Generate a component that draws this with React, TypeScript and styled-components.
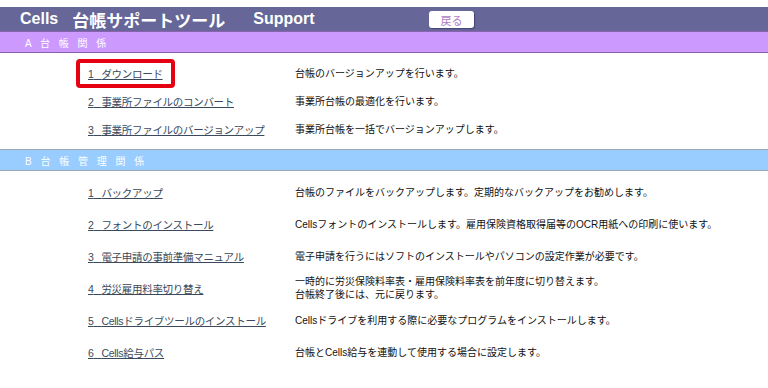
import React from 'react';
import styled, { createGlobalStyle } from 'styled-components';

const GlobalStyle = createGlobalStyle`
  html, body {
    margin: 0;
    padding: 0;
    background: #ffffff;
  }
  body {
    font-family: 'Liberation Sans', 'Noto Sans CJK JP', sans-serif;
  }
`;

interface Item {
  num: string;
  label: string;
  desc: string[];
  highlight?: boolean;
}

const sectionA: Item[] = [
  { num: '1', label: 'ダウンロード', desc: ['台帳のバージョンアップを行います。'], highlight: true },
  { num: '2', label: '事業所ファイルのコンバート', desc: ['事業所台帳の最適化を行います。'] },
  { num: '3', label: '事業所ファイルのバージョンアップ', desc: ['事業所台帳を一括でバージョンアップします。'] },
];

const sectionB: Item[] = [
  { num: '1', label: 'バックアップ', desc: ['台帳のファイルをバックアップします。定期的なバックアップをお勧めします。'] },
  { num: '2', label: 'フォントのインストール', desc: ['Cellsフォントのインストールします。雇用保険資格取得届等のOCR用紙への印刷に使います。'] },
  { num: '3', label: '電子申請の事前準備マニュアル', desc: ['電子申請を行うにはソフトのインストールやパソコンの設定作業が必要です。'] },
  { num: '4', label: '労災雇用料率切り替え', desc: ['一時的に労災保険料率表・雇用保険料率表を前年度に切り替えます。', '台帳終了後には、元に戻ります。'] },
  { num: '5', label: 'Cellsドライブツールのインストール', desc: ['Cellsドライブを利用する際に必要なプログラムをインストールします。'] },
  { num: '6', label: 'Cells給与パス', desc: ['台帳とCells給与を連動して使用する場合に設定します。'] },
];

const ItemRow = ({ item, height }: { item: Item; height: number }) => {
  const link = (
    <ItemLink href="#">
      {item.num}
      {'\u00a0\u00a0\u00a0'}
      {item.label}
    </ItemLink>
  );
  return (
    <Row height={height}>
      <LinkCell>{item.highlight ? <Highlight>{link}</Highlight> : link}</LinkCell>
      <Desc>
        {item.desc.map((d, j) => (
          <div key={j}>{d}</div>
        ))}
      </Desc>
    </Row>
  );
};

const App = () => {
  return (
    <>
      <GlobalStyle />
      <Page>
        <Header>
          <Title>
            <span>Cells</span>
            <TitleJa>台帳サポートツール</TitleJa>
            <span>Support</span>
          </Title>
          <BackButton>戻る</BackButton>
        </Header>
        <SectionBar color="#cc99ff" border="#8a62b0">A 台 帳 関 係</SectionBar>
        <List pad="6px 0 6px">
          {sectionA.map((item, i) => (
            <ItemRow key={i} item={item} height={28} />
          ))}
        </List>
        <SectionBar color="#99ccff" border="#9aa7b5">B 台 帳 管 理 関 係</SectionBar>
        <List pad="5px 0 0">
          {sectionB.map((item, i) => (
            <ItemRow key={i} item={item} height={32} />
          ))}
        </List>
      </Page>
    </>
  );
};

const Page = styled.div`
  padding-top: 7px;
  width: 768px;
`;

const Header = styled.div`
  height: 24px;
  background: #666699;
  display: flex;
  align-items: center;
  padding-left: 20px;
`;

const Title = styled.div`
  display: flex;
  align-items: center;
  gap: 14px;
  color: #ffffff;
  font-size: 16px;
  font-weight: 600;
  width: 409px;
  span:last-child {
    margin-left: 14px;
  }
`;

const TitleJa = styled.span`
  font-size: 17px;
`;

const BackButton = styled.div`
  width: 45px;
  height: 17px;
  background: #ffffff;
  border-radius: 3px;
  box-shadow: 1px 1px 1px rgba(40, 30, 80, 0.5);
  color: #b07cc8;
  font-size: 11px;
  display: flex;
  align-items: center;
  justify-content: center;
  margin-top: 1px;
`;

const SectionBar = styled.div<{ color: string; border: string }>`
  height: 20px;
  background: ${(p) => p.color};
  border-top: 1px solid ${(p) => p.border};
  border-bottom: 1px solid ${(p) => p.border};
  color: #ffffff;
  font-size: 10px;
  display: flex;
  align-items: center;
  padding-left: 25px;
  letter-spacing: 2.5px;
  word-spacing: 1px;
`;

const List = styled.div<{ pad: string }>`
  display: flex;
  flex-direction: column;
  padding: ${(p) => p.pad};
`;

const Row = styled.div<{ height: number }>`
  display: grid;
  grid-template-columns: 207px 1fr;
  align-items: center;
  height: ${(p) => p.height}px;
  padding-left: 88px;
`;

const LinkCell = styled.div`
  display: flex;
  align-items: center;
`;

const ItemLink = styled.a`
  color: #3a4a5c;
  font-size: 10.5px;
  text-decoration: underline;
  white-space: nowrap;
  letter-spacing: -0.3px;
  font-family: 'Liberation Sans', 'Noto Sans CJK JP', sans-serif;
`;

const Highlight = styled.span`
  display: inline-block;
  border: 4px solid #e50012;
  border-radius: 4px;
  padding: 3px 8px;
  margin: -7px -12px;
  line-height: 13px;
`;

const Desc = styled.div`
  color: #111111;
  font-size: 10px;
  line-height: 13px;
  white-space: nowrap;
`;

export default App;
